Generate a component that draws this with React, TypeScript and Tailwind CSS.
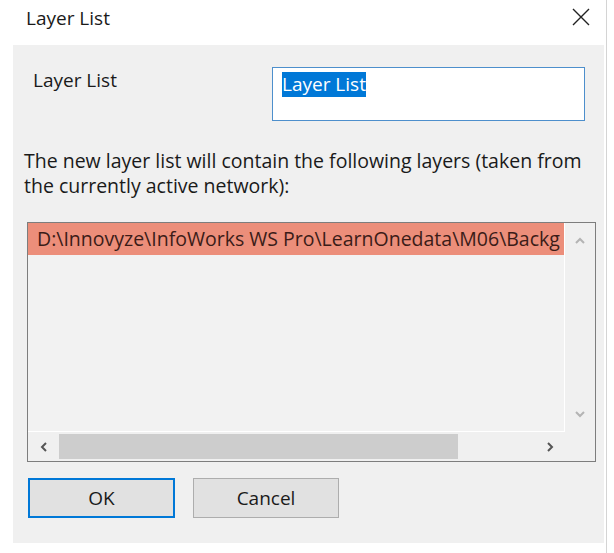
import React from 'react';

const FONT = "font-['Open_Sans','Noto_Sans',sans-serif]";

function Chevron({ dir, className }: { dir: 'up' | 'down' | 'left' | 'right'; className?: string }) {
  const d = {
    up: 'M2 8 L6 4 L10 8',
    down: 'M2 4 L6 8 L10 4',
    left: 'M8 2 L4 6 L8 10',
    right: 'M4 2 L8 6 L4 10',
  }[dir];
  return (
    <svg width="12" height="12" viewBox="0 0 12 12" className={className}>
      <path d={d} fill="none" stroke="currentColor" strokeWidth="2" />
    </svg>
  );
}

export default function App() {
  return (
    <div className={`${FONT} w-[614px] h-[553px] bg-white text-[#1a1a1a] overflow-hidden`}>
      <div className="w-[607px] h-[553px] border-r border-[#d4d4d4] flex flex-col">
        {/* Title bar */}
        <div className="h-[45px] shrink-0 flex items-start justify-between pl-[26px] pr-[16px] pt-[8px]">
          <span className="text-[19px] leading-[20px]">Layer List</span>
          <svg width="18" height="18" viewBox="0 0 18 18" className="text-[#222]">
            <path d="M1 1 L17 17 M17 1 L1 17" stroke="currentColor" strokeWidth="1.4" />
          </svg>
        </div>

        {/* Body */}
        <div className="ml-[13px] w-[591px] h-[498px] bg-[#f0f0f0] flex flex-col">
          <div className="flex pt-[22px]">
            <div className="w-[259px] pl-[20px] pt-[1px] text-[19px] leading-[24px]">Layer List</div>
            <div className="w-[313px] h-[54px] bg-white border border-[#4d8fcc] px-[9px] pt-[4px]">
              <span className="bg-[#0078d7] text-white text-[19px] leading-[25px] inline-block">Layer List</span>
            </div>
          </div>

          <p className="mt-[27px] ml-[11px] text-[19.5px] leading-[25px] w-[580px]">
            The new layer list will contain the following layers (taken from the currently active network):
          </p>

          {/* List box */}
          <div className="mt-[24px] ml-[14px] w-[569px] h-[240px] border border-[#7d7d7d] flex flex-col">
            <div className="flex flex-1 min-h-0">
              <div className="flex-1 min-w-0 bg-[#f2f2f2] border-r border-b border-white overflow-hidden">
                <div className="h-[32px] bg-[#ec8e7a] text-[#3b1c18] text-[19.5px] leading-[32px] pl-[9px] whitespace-nowrap">
                  D:\Innovyze\InfoWorks WS Pro\LearnOnedata\M06\Backg
                </div>
              </div>
              <div className="w-[30px] flex flex-col items-center justify-between py-[12px] text-[#b4b4b4]">
                <Chevron dir="up" />
                <Chevron dir="down" />
              </div>
            </div>
            <div className="h-[29px] flex">
              <div className="flex-1 flex items-center">
                <div className="w-[31px] flex justify-center text-[#555]">
                  <Chevron dir="left" />
                </div>
                <div className="w-[399px] h-[25px] bg-[#cdcdcd]" />
                <div className="flex-1" />
                <div className="w-[31px] flex justify-center text-[#555]">
                  <Chevron dir="right" />
                </div>
              </div>
              <div className="w-[30px]" />
            </div>
          </div>

          {/* Buttons */}
          <div className="mt-[16px] ml-[15px] flex gap-[18px]">
            <button className="w-[147px] h-[40px] bg-[#e1e1e1] border-2 border-[#0078d7] text-[19px] leading-none">
              OK
            </button>
            <button className="w-[146px] h-[40px] bg-[#e1e1e1] border border-[#adadad] text-[19px] leading-none">
              Cancel
            </button>
          </div>
        </div>
      </div>
    </div>
  );
}
